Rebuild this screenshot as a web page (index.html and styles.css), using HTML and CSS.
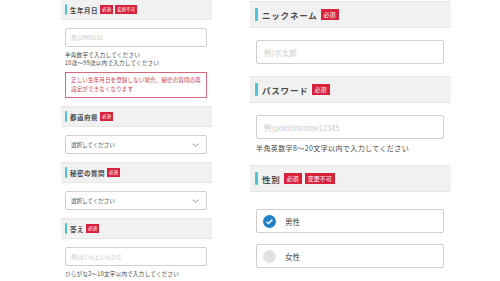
FILE: index.html
```html
<!DOCTYPE html>
<html lang="ja">
<head>
  <meta charset="UTF-8" />
  <title>会員登録</title>
  <link rel="stylesheet" href="styles.css">
</head>
<body>
  <div class="page">
    <!-- small form -->
    <div class="panel small">
      <div class="head first">
        <span class="bar"></span><span class="label">生年月日</span>
        <span class="badge">必須</span><span class="badge">変更不可</span>
      </div>
      <div class="field"><div class="box input"><span class="ph">例)19900101</span></div></div>
      <p class="help">半角数字で入力してください<br>10歳～99歳以内で入力してください</p>
      <div class="alert">正しい生年月日を登録しない場合、秘密の質問の再設定ができなくなります</div>

      <div class="head">
        <span class="bar"></span><span class="label">都道府県</span>
        <span class="badge">必須</span>
      </div>
      <div class="field">
        <div class="box select"><span>選択してください</span>
          <svg class="chev" viewBox="0 0 10 6"><path d="M1 1l4 4 4-4" fill="none" stroke="#777" stroke-width="1.2"/></svg>
        </div>
      </div>

      <div class="head">
        <span class="bar"></span><span class="label">秘密の質問</span>
        <span class="badge">必須</span>
      </div>
      <div class="field">
        <div class="box select"><span>選択してください</span>
          <svg class="chev" viewBox="0 0 10 6"><path d="M1 1l4 4 4-4" fill="none" stroke="#777" stroke-width="1.2"/></svg>
        </div>
      </div>

      <div class="head">
        <span class="bar"></span><span class="label">答え</span>
        <span class="badge">必須</span>
      </div>
      <div class="field"><div class="box input"><span class="ph">例)ぽいんといんかむ</span></div></div>
      <p class="help">ひらがな2～10文字以内で入力してください</p>
    </div>

    <!-- large form -->
    <div class="panel large">
      <div class="head first">
        <span class="bar"></span><span class="label">ニックネーム</span>
        <span class="badge">必須</span>
      </div>
      <div class="field"><div class="box input"><span class="ph">例)ポ太郎</span></div></div>

      <div class="head">
        <span class="bar"></span><span class="label">パスワード</span>
        <span class="badge">必須</span>
      </div>
      <div class="field"><div class="box input"><span class="ph">例)pointincome12345</span></div></div>
      <p class="help">半角英数字8～20文字以内で入力してください</p>

      <div class="head">
        <span class="bar"></span><span class="label">性別</span>
        <span class="badge">必須</span><span class="badge">変更不可</span>
      </div>
      <div class="field radios">
        <div class="box radio">
          <svg class="dot" viewBox="0 0 12 12"><circle cx="6" cy="6" r="6" fill="#1f80c8"/><path d="M3.3 6.2l1.8 1.7 3.6-3.6" fill="none" stroke="#fff" stroke-width="1.4"/></svg>
          <span>男性</span>
        </div>
        <div class="box radio">
          <svg class="dot" viewBox="0 0 12 12"><circle cx="6" cy="6" r="6" fill="#e2e2e2"/></svg>
          <span>女性</span>
        </div>
      </div>
    </div>
  </div>
</body>
</html>
```

FILE: styles.css
```css
body {
  margin: 0;
  background: #fff;
  font-family: "Noto Sans CJK JP", "Noto Sans", sans-serif;
  color: #444;
}
.page {
  display: flex;
  align-items: flex-start;
  padding-left: 61px;
  gap: 38px;
}
.panel {
  display: flex;
  flex-direction: column;
}
.small {
  width: 151px;
  margin-top: -1px;
}
.large {
  width: 201px;
  margin-top: 1px;
}
.head {
  display: flex;
  align-items: center;
  background: #f1f1f1;
  border-top: 1px solid #e6e6e6;
  border-bottom: 1px solid #e6e6e6;
}
.bar {
  background: #4cc3d8;
  border-radius: 1px;
}
.label {
  font-weight: bold;
  color: #4a4a4a;
}
.badge {
  background: #d8213b;
  color: #fff;
  line-height: 1;
}
.box {
  border: 1px solid #cfcfcf;
  border-radius: 2px;
  background: #fff;
  display: flex;
  align-items: center;
  box-sizing: border-box;
}
.ph {
  color: #c9c9c9;
}
.help {
  margin: 0;
  color: #444;
}

/* small */
.small .head {
  height: 21px;
  box-sizing: border-box;
  padding-left: 4px;
  margin-top: 8px;
}
.small .head.first {
  margin-top: 0;
}
.small .bar {
  width: 2px;
  height: 11px;
  margin-right: 3px;
}
.small .label {
  font-size: 6.5px;
  letter-spacing: 0.5px;
  margin-right: 2px;
}
.small .badge {
  font-size: 4.5px;
  padding: 2px 2px;
  margin-right: 2px;
}
.small .field {
  padding: 8px 5px 0 4px;
}
.small .box {
  height: 19px;
  padding-left: 5px;
  font-size: 5.5px;
}
.small .select {
  justify-content: space-between;
  padding-right: 7px;
  color: #444;
}
.small .chev {
  width: 7px;
  height: 4px;
}
.small .help {
  font-size: 5.5px;
  line-height: 8px;
  padding: 4px 0 0 4px;
  letter-spacing: 0.3px;
}
.alert {
  margin: 5px 5px 0 4px;
  border: 1px solid #d9697a;
  color: #c83a50;
  font-size: 5.5px;
  line-height: 9px;
  padding: 3px 3px 3px 5px;
  letter-spacing: 0.15px;
}

/* large */
.large .head {
  height: 27px;
  box-sizing: border-box;
  padding-left: 5px;
  margin-top: 12px;
}
.large .head.first {
  margin-top: 0;
}
.large .bar {
  width: 3px;
  height: 13px;
  margin-right: 4px;
}
.large .label {
  font-size: 8.5px;
  letter-spacing: 0.8px;
  margin-right: 3px;
}
.large .badge {
  font-size: 6px;
  padding: 2.5px 3px;
  margin-right: 3px;
}
.large .field {
  padding: 12px 7px 0 6px;
}
.large .box {
  height: 24px;
  padding-left: 7px;
  font-size: 7.5px;
}
.large .help {
  font-size: 7px;
  padding: 4px 0 0 6px;
  letter-spacing: 0.4px;
}
.radios {
  display: flex;
  flex-direction: column;
  gap: 11px;
  padding-top: 17px !important;
}
.large .radio {
  padding-left: 6px;
  color: #444;
}
.dot {
  width: 13px;
  height: 13px;
  margin-right: 9px;
}
```
